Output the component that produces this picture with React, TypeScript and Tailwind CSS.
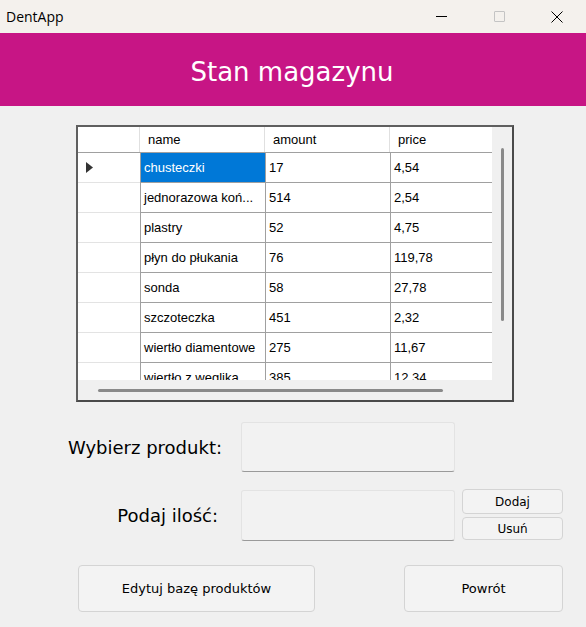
const rows = [
  { name: 'chusteczki', amount: '17', price: '4,54' },
  { name: 'jednorazowa koń...', amount: '514', price: '2,54' },
  { name: 'plastry', amount: '52', price: '4,75' },
  { name: 'płyn do płukania', amount: '76', price: '119,78' },
  { name: 'sonda', amount: '58', price: '27,78' },
  { name: 'szczoteczka', amount: '451', price: '2,32' },
  { name: 'wiertło diamentowe', amount: '275', price: '11,67' },
  { name: 'wiertło z węglika', amount: '385', price: '12,34' },
];

const comic = "font-['DejaVu_Sans',sans-serif]";
const grid = "font-['Liberation_Sans',Arial,sans-serif] text-[13px] text-black";

export default function App() {
  return (
    <div className="w-[586px] h-[627px] bg-[#f0f0f0] flex flex-col overflow-hidden">
      {/* Window title bar */}
      <div className="h-[33px] bg-[#f4f1ed] flex items-center">
        <span className="pl-[6px] font-['Open_Sans',sans-serif] text-[14px] text-black">DentApp</span>
        <div className="ml-auto flex items-center h-full">
          <div className="w-[58px] flex justify-center">
            <div className="w-[11px] h-px bg-black" />
          </div>
          <div className="w-[58px] flex justify-center">
            <div className="w-[11px] h-[11px] border border-[#c4c4c4] rounded-[1px]" />
          </div>
          <div className="w-[58px] flex justify-center">
            <svg width="12" height="12" viewBox="0 0 12 12">
              <path d="M0.5 0.5 L11.5 11.5 M11.5 0.5 L0.5 11.5" stroke="#000" strokeWidth="1" />
            </svg>
          </div>
        </div>
      </div>

      {/* Header */}
      <div className="h-[73px] bg-[#c71585] flex items-center justify-center pt-[5px]">
        <h1 className={`${comic} text-white text-[26px] pr-[2px]`}>Stan magazynu</h1>
      </div>

      {/* Data grid */}
      <div className="mt-[19px] ml-[76px] w-[438px] h-[277px] border-2 border-t-[#5f5f5f] border-l-[#5f5f5f] border-r-[#4a4a4a] border-b-[#4a4a4a] flex bg-[#f0f0f0]">
        <div className="w-[414px] flex flex-col">
          <div className={`h-[253px] overflow-hidden bg-white ${grid}`}>
            <div className="flex h-[26px] border-b border-[#a0a0a0]">
              <div className="w-[62px] border-r border-[#e0e0e0]" />
              <div className="w-[125px] pl-[8px] pt-[1px] flex items-center border-r border-[#e0e0e0]">name</div>
              <div className="w-[125px] pl-[8px] pt-[1px] flex items-center border-r border-[#e0e0e0]">amount</div>
              <div className="w-[102px] pl-[8px] pt-[1px] flex items-center">price</div>
            </div>
            {rows.map((r, i) => (
              <div key={r.name} className="flex h-[30px]">
                <div className="w-[62px] border-b border-[#e3e3e3] flex items-center pl-[8px]">
                  {i === 0 && (
                    <svg width="7" height="11" viewBox="0 0 7 11">
                      <path d="M0 0 L7 5.5 L0 11 Z" fill="#333" />
                    </svg>
                  )}
                </div>
                <div
                  className={`w-[125px] border-l border-b border-[#a0a0a0] pl-[3px] flex items-center whitespace-nowrap overflow-hidden ${
                    i === 0 ? 'bg-[#0078d7] text-white' : ''
                  }`}
                >
                  {r.name}
                </div>
                <div className="w-[125px] border-l border-b border-[#a0a0a0] pl-[3px] flex items-center">{r.amount}</div>
                <div className="w-[102px] border-l border-b border-[#a0a0a0] pl-[3px] flex items-center">{r.price}</div>
              </div>
            ))}
          </div>
          <div className="h-[20px] flex items-center pl-[20px]">
            <div className="w-[345px] h-[3px] rounded-full bg-[#8a8a8a]" />
          </div>
        </div>
        <div className="w-[20px] flex justify-center pt-[21px]">
          <div className="w-[3px] h-[173px] rounded-full bg-[#8a8a8a]" />
        </div>
      </div>

      {/* Form */}
      <div className="mt-[20px] flex items-center">
        <div className={`w-[222px] text-right ${comic} text-[18px] text-black`}>Wybierz produkt:</div>
        <div className="ml-[19px] w-[214px] h-[50px] bg-[#f2f2f2] border border-[#e3e3e3] border-b-[#9a9a9a] rounded-[3px]" />
      </div>
      <div className="mt-[18px] flex items-center">
        <div className={`w-[218px] text-right ${comic} text-[18px] text-black`}>Podaj ilość:</div>
        <div className="ml-[23px] w-[214px] h-[51px] bg-[#f2f2f2] border border-[#e3e3e3] border-b-[#9a9a9a] rounded-[3px]" />
        <div className="ml-[7px] flex flex-col gap-[3px] -mt-[2px]">
          <button className={`w-[101px] h-[25px] bg-[#f3f3f3] border border-[#d4d4d4] rounded-[4px] ${comic} text-[12px] text-black`}>Dodaj</button>
          <button className={`w-[101px] h-[23px] bg-[#f3f3f3] border border-[#d4d4d4] rounded-[4px] ${comic} text-[12px] text-black`}>Usuń</button>
        </div>
      </div>

      {/* Bottom buttons */}
      <div className="mt-[24px] flex">
        <button className={`ml-[78px] w-[237px] h-[47px] bg-[#f3f3f3] border border-[#d4d4d4] rounded-[4px] ${comic} text-[13px] text-black`}>
          Edytuj bazę produktów
        </button>
        <button className={`ml-[89px] w-[159px] h-[47px] bg-[#f3f3f3] border border-[#d4d4d4] rounded-[4px] ${comic} text-[13px] text-black`}>
          Powrót
        </button>
      </div>
    </div>
  );
}
